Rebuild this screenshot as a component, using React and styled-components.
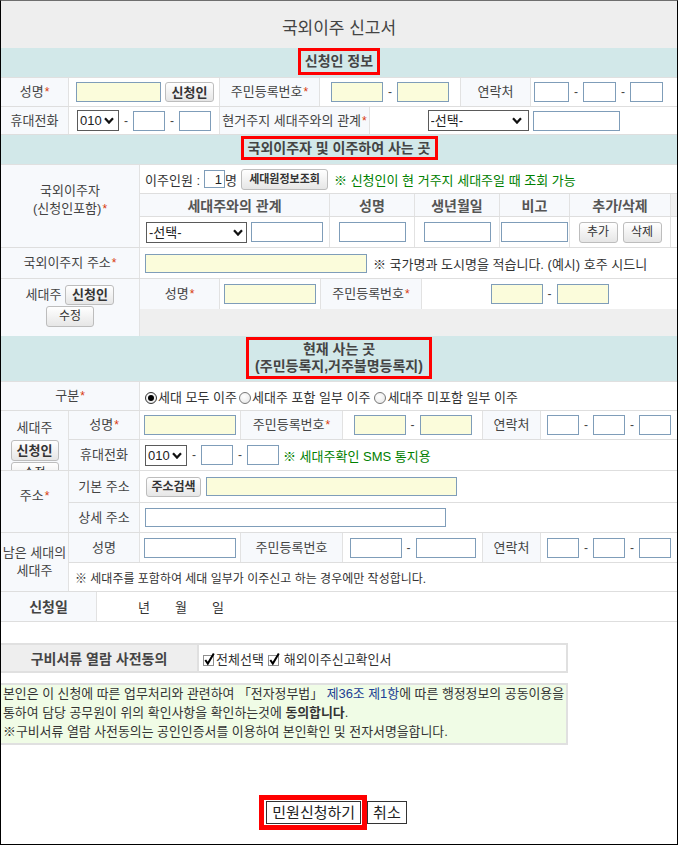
import React from 'react'
import styled, { createGlobalStyle } from 'styled-components'

const GlobalStyle = createGlobalStyle`
  html, body { margin: 0; padding: 0; background: #fff; }
  body {
    font-family: "Liberation Sans", "Noto Sans CJK KR", sans-serif;
    font-size: 13px;
    color: #333;
  }
  *, *::before, *::after { box-sizing: border-box; }
`

const Frame = styled.div`
  width: 678px;
  height: 845px;
  border: 1px solid #000;
  border-top-color: #6e6e6e;
  overflow: hidden;
`

const Title = styled.h1`
  margin: 0;
  height: 47px;
  padding-top: 4px;
  background: #eeeeee;
  display: flex;
  align-items: center;
  justify-content: center;
  font-size: 17px;
  font-weight: normal;
  color: #444;
`

const SectionHead = styled.div`
  height: ${p => p.$h}px;
  background: #d2e8e9;
  border-bottom: 1px solid #e0e0e0;
  display: flex;
  align-items: center;
  justify-content: center;
`

const RedBox = styled.div`
  margin-top: ${p => p.$mt || 0}px;
  border: 3px solid #ff0000;
  padding: 1px ${p => p.$px ?? 2}px;
  font-size: 14px;
  font-weight: bold;
  line-height: ${p => p.$lh}px;
  color: #444;
  text-align: center;
  white-space: nowrap;
`

const Row = styled.div`
  display: flex;
  height: ${p => p.$h}px;
  border-bottom: ${p => (p.$flat ? 'none' : '1px solid #dedede')};
`

const Block = styled.div`
  display: flex;
  height: ${p => p.$h}px;
  border-bottom: 1px solid #dedede;
`

const Stack = styled.div`
  flex: 1 1 0;
  min-width: 0;
  display: flex;
  flex-direction: column;
`

const Filler = styled.div`
  flex: 1 1 0;
  background: #efefef;
`

const Label = styled.div`
  flex: 0 0 ${p => p.$w}px;
  display: flex;
  flex-direction: ${p => (p.$col ? 'column' : 'row')};
  align-items: center;
  justify-content: ${p => (p.$top ? 'flex-start' : 'center')};
  padding: ${p => p.$pad || '0'};
  background: #f7f9fc;
  border-right: 1px solid #e2e2e2;
  color: #444;
  font-size: ${p => (p.$bold ? 14 : 13)}px;
  font-weight: ${p => (p.$bold ? 'bold' : 'normal')};
  line-height: 18px;
  text-align: center;
  white-space: nowrap;
  overflow: hidden;
`

const LabelLine = styled.span`
  display: flex;
  align-items: center;
  gap: 4px;
  margin-top: ${p => p.$mt || 0}px;
`

const Cell = styled.div`
  flex: ${p => (p.$w ? `0 0 ${p.$w}px` : '1 1 0')};
  min-width: 0;
  display: flex;
  align-items: center;
  justify-content: ${p => (p.$center ? 'center' : 'flex-start')};
  padding-left: ${p => p.$pl || 0}px;
  border-right: 1px solid #e2e2e2;
  white-space: nowrap;
  color: #333;
  &:last-child { border-right: none; }
`

const HeadCell = styled.div`
  flex: 0 0 ${p => p.$w}px;
  display: flex;
  align-items: center;
  justify-content: center;
  background: #f7f9fc;
  border-right: 1px solid #e2e2e2;
  font-size: 14px;
  font-weight: bold;
  color: #555;
`

const HeadTail = styled.div`
  flex: 1 1 0;
  background: #f0f0f0;
`

const Star = styled.span`
  color: #d8380d;
  margin-left: 1px;
  font-size: 12px;
`

const Text = styled.span`
  margin-left: ${p => p.$ml || 0}px;
  color: ${p => (p.$green ? '#008000' : '#333')};
  font-size: ${p => p.$fs || 13}px;
`

const DateWord = styled.span`
  margin-left: ${p => p.$ml}px;
  color: #333;
`

const TextInput = styled.input`
  flex: none;
  width: ${p => p.$w}px;
  height: ${p => p.$h || 20}px;
  margin: 0 0 0 ${p => p.$ml || 0}px;
  padding: 0 2px;
  border: 1px solid #7f9db9;
  border-radius: 0;
  background: ${p => (p.$req ? '#fbfcdb' : '#fff')};
  font: inherit;
  font-size: 13px;
  color: #222;
  text-align: ${p => (p.$right ? 'right' : 'left')};
  outline: none;
`

const Dash = styled.span`
  margin: 0 5px;
  color: #444;
  font-size: 12px;
`

const Btn = styled.button`
  flex: none;
  width: ${p => p.$w}px;
  height: ${p => p.$h || 20}px;
  margin: 0 0 0 ${p => p.$ml || 0}px;
  padding: 0;
  border: 1px solid #bdbdbd;
  border-radius: 3px;
  background: linear-gradient(#ffffff, #e6e6e6);
  font-family: inherit;
  font-size: ${p => p.$fs || 12}px;
  font-weight: ${p => (p.$bold ? 'bold' : 'normal')};
  color: #333;
  line-height: 1;
  cursor: pointer;
`

const SelectBox = styled.span`
  position: relative;
  display: inline-block;
  flex: none;
  width: ${p => p.$w}px;
  height: 21px;
  margin-left: ${p => p.$ml || 0}px;
`

const NativeSelect = styled.select`
  appearance: none;
  -webkit-appearance: none;
  width: 100%;
  height: 100%;
  margin: 0;
  padding: 0 0 0 2px;
  border: 1px solid #5a5a5a;
  border-radius: 0;
  background: #fff;
  font: inherit;
  font-size: 13px;
  color: #222;
  outline: none;
`

const Chevron = styled.svg`
  position: absolute;
  right: ${p => p.$r}px;
  top: 7px;
  pointer-events: none;
`

function Select({ w, ml, r = 6, options }) {
  return (
    <SelectBox $w={w} $ml={ml}>
      <NativeSelect defaultValue={options[0]}>
        {options.map(o => <option key={o}>{o}</option>)}
      </NativeSelect>
      <Chevron $r={r} width="10" height="7" viewBox="0 0 10 7">
        <path d="M1 1.2 L5 5.6 L9 1.2" fill="none" stroke="#111" strokeWidth="2.2" />
      </Chevron>
    </SelectBox>
  )
}

const RadioGroup = styled.div`
  display: flex;
  align-items: center;
`

const RadioMark = styled.span`
  position: relative;
  flex: none;
  width: 12px;
  height: 12px;
  margin: 4px 1px 0 ${p => p.$ml || 0}px;
  border-radius: 50%;
  border: 1px solid ${p => (p.$on ? '#333' : '#777')};
  background: radial-gradient(circle at 40% 35%, #fff 0%, #e4e4e4 100%);
  &::after {
    content: '';
    display: ${p => (p.$on ? 'block' : 'none')};
    position: absolute;
    left: 2px;
    top: 2px;
    width: 6px;
    height: 6px;
    border-radius: 50%;
    background: #000;
  }
`

const CheckMark = styled.span`
  display: inline-flex;
  flex: none;
  margin-left: ${p => p.$ml || 0}px;
`

function Check({ ml }) {
  return (
    <CheckMark $ml={ml}>
      <svg width="13" height="15" viewBox="0 0 13 15">
        <rect x="0.5" y="4.5" width="10" height="10" fill="#fff" stroke="#8f8f8f" />
        <path d="M2.3 9 L4.8 12.6 L10.8 2.5" fill="none" stroke="#000" strokeWidth="2" />
      </svg>
    </CheckMark>
  )
}

const ConsentTable = styled.div`
  display: flex;
  width: 567px;
  height: 30px;
  margin-top: 21px;
  border: 2px solid #e0e0e0;
  border-left: none;
`

const ConsentLabel = styled.div`
  flex: 0 0 198px;
  display: flex;
  align-items: center;
  justify-content: center;
  background: #eeeeee;
  border-right: 2px solid #e0e0e0;
  font-size: 14px;
  font-weight: bold;
  color: #444;
`

const ConsentCell = styled.div`
  flex: 1 1 0;
  display: flex;
  align-items: center;
  padding-left: 4px;
  font-size: 13px;
  color: #333;
`

const AgreeBox = styled.div`
  width: 567px;
  height: 62px;
  margin-top: 10px;
  padding-left: 2px;
  background: #f0fce6;
  border: 2px solid #e0e0e0;
  border-left: none;
  font-size: 12.9px;
  line-height: 19px;
  color: #333;
`

const AgreeLine = styled.div`
  white-space: nowrap;
  margin-top: ${p => p.$mt || 0}px;
`

const Law = styled.span`
  color: #1c3f94;
`

const Actions = styled.div`
  display: flex;
  justify-content: center;
  align-items: center;
  margin-top: 50px;
  padding-right: 12px;
`

const Highlight = styled.span`
  display: inline-flex;
  border: 5px solid #ff0000;
  padding: 1px 1px 1px 2px;
`

const ActionBtn = styled.button`
  height: 23px;
  padding: 0 ${p => p.$px}px;
  border: 1px solid #333;
  border-radius: 0;
  background: #fff;
  font-family: inherit;
  font-size: 15px;
  line-height: 21px;
  color: #222;
  cursor: pointer;
`

const phonePrefixes = ['010', '011', '016', '017', '018', '019']

export default function App() {
  return (
    <>
      <GlobalStyle />
      <Frame>
        <Title>국외이주 신고서</Title>

        <SectionHead $h={30}>
          <RedBox $lh={19} $px={4} $mt={-3}>신청인 정보</RedBox>
        </SectionHead>
        <Row $h={29}>
          <Label $w={68}>성명<Star>*</Star></Label>
          <Cell $w={151} $pl={7}>
            <TextInput $w={85} $req />
            <Btn $w={49} $ml={4} $fs={13} $bold>신청인</Btn>
          </Cell>
          <Label $w={100}>주민등록번호<Star>*</Star></Label>
          <Cell $w={141} $center>
            <TextInput $w={52} $req /><Dash>-</Dash><TextInput $w={52} $req />
          </Cell>
          <Label $w={70}>연락처</Label>
          <Cell $pl={3}>
            <TextInput $w={35} /><Dash>-</Dash><TextInput $w={33} /><Dash>-</Dash><TextInput $w={33} />
          </Cell>
        </Row>
        <Row $h={28}>
          <Label $w={68}>휴대전화</Label>
          <Cell $w={151} $pl={8}>
            <Select w={42} r={5} options={phonePrefixes} />
            <Dash>-</Dash><TextInput $w={32} /><Dash>-</Dash><TextInput $w={32} />
          </Cell>
          <Label $w={150}>현거주지 세대주와의 관계<Star>*</Star></Label>
          <Cell $center>
            <Select w={101} r={7} options={['-선택-']} />
            <TextInput $w={87} $ml={4} />
          </Cell>
        </Row>

        <SectionHead $h={30}>
          <RedBox $lh={16} $px={4} $mt={-3}>국외이주자 및 이주하여 사는 곳</RedBox>
        </SectionHead>
        <Block $h={83}>
          <Label $w={139} $col $pad="0 0 12px">
            <span>국외이주자</span>
            <span>(신청인포함)<Star>*</Star></span>
          </Label>
          <Stack>
            <Row $h={29}>
              <Cell $pl={5}>
                <Text>이주인원 :</Text>
                <TextInput $w={21} $h={18} $ml={4} $right defaultValue="1" />
                <Text>명</Text>
                <Btn $w={87} $h={21} $ml={4} $fs={11} $bold>세대원정보조회</Btn>
                <Text $ml={6} $green>※ 신청인이 현 거주지 세대주일 때 조회 가능</Text>
              </Cell>
            </Row>
            <Row $h={23}>
              <HeadCell $w={190}>세대주와의 관계</HeadCell>
              <HeadCell $w={85}>성명</HeadCell>
              <HeadCell $w={85}>생년월일</HeadCell>
              <HeadCell $w={70}>비고</HeadCell>
              <HeadCell $w={101}>추가/삭제</HeadCell>
              <HeadTail />
            </Row>
            <Row $h={30} $flat>
              <Cell $w={190} $pl={6}>
                <Select w={101} r={4} options={['-선택-']} />
                <TextInput $w={72} $ml={4} />
              </Cell>
              <Cell $w={85} $center><TextInput $w={67} /></Cell>
              <Cell $w={85} $center><TextInput $w={67} /></Cell>
              <Cell $w={70} $center><TextInput $w={67} /></Cell>
              <Cell $w={101} $center>
                <Btn $w={39} $h={21}>추가</Btn>
                <Btn $w={39} $h={21} $ml={5}>삭제</Btn>
              </Cell>
              <Cell />
            </Row>
          </Stack>
        </Block>
        <Row $h={31}>
          <Label $w={139}>국외이주지 주소<Star>*</Star></Label>
          <Cell $pl={5}>
            <TextInput $w={222} $h={19} $req />
            <Text $ml={6}>※ 국가명과 도시명을 적습니다. (예시) 호주 시드니</Text>
          </Cell>
        </Row>
        <Row $h={57} $flat>
          <Label $w={139} $col $pad="0 0 4px">
            <LabelLine>세대주<Btn $w={49} $fs={13} $bold>신청인</Btn></LabelLine>
            <LabelLine $mt={1}><Btn $w={48} $h={21}>수정</Btn></LabelLine>
          </Label>
          <Stack>
            <Row $h={30} $flat>
              <Label $w={80}>성명<Star>*</Star></Label>
              <Cell $w={101} $pl={4}><TextInput $w={92} $req /></Cell>
              <Label $w={101}>주민등록번호<Star>*</Star></Label>
              <Cell $center>
                <TextInput $w={52} $req /><Dash>-</Dash><TextInput $w={52} $req />
              </Cell>
            </Row>
            <Filler />
          </Stack>
        </Row>

        <SectionHead $h={46}>
          <RedBox $lh={17} $px={6} $mt={-1}>
            현재 사는 곳<br />(주민등록지,거주불명등록지)
          </RedBox>
        </SectionHead>
        <Row $h={29}>
          <Label $w={139}>구분<Star>*</Star></Label>
          <Cell $pl={5}>
            <RadioGroup>
              <RadioMark $on />
              <Text>세대 모두 이주</Text>
              <RadioMark $ml={2} />
              <Text>세대주 포함 일부 이주</Text>
              <RadioMark $ml={4} />
              <Text>세대주 미포함 일부 이주</Text>
            </RadioGroup>
          </Cell>
        </Row>
        <Block $h={60}>
          <Label $w={68} $col $top $pad="8px 0 0">
            <span>세대주</span>
            <LabelLine $mt={3}><Btn $w={48} $h={21} $fs={13} $bold>신청인</Btn></LabelLine>
            <LabelLine $mt={1}><Btn $w={48} $h={21}>수정</Btn></LabelLine>
          </Label>
          <Stack>
            <Row $h={29}>
              <Label $w={71}>성명<Star>*</Star></Label>
              <Cell $w={101} $pl={4}><TextInput $w={92} $req /></Cell>
              <Label $w={102}>주민등록번호<Star>*</Star></Label>
              <Cell $w={140} $center>
                <TextInput $w={52} $req /><Dash>-</Dash><TextInput $w={52} $req />
              </Cell>
              <Label $w={58}>연락처</Label>
              <Cell $pl={6}>
                <TextInput $w={32} /><Dash>-</Dash><TextInput $w={32} /><Dash>-</Dash><TextInput $w={32} />
              </Cell>
            </Row>
            <Row $h={30} $flat>
              <Label $w={71}>휴대전화</Label>
              <Cell $pl={5}>
                <Select w={42} r={5} options={phonePrefixes} />
                <Dash>-</Dash><TextInput $w={32} /><Dash>-</Dash><TextInput $w={32} />
                <Text $ml={4} $green>※ 세대주확인 SMS 통지용</Text>
              </Cell>
            </Row>
          </Stack>
        </Block>
        <Block $h={62}>
          <Label $w={68} $pad="0 0 12px">주소<Star>*</Star></Label>
          <Stack>
            <Row $h={32}>
              <Label $w={71}>기본 주소</Label>
              <Cell $pl={6}>
                <Btn $w={55} $fs={12} $bold>주소검색</Btn>
                <TextInput $w={251} $h={19} $ml={5} $req />
              </Cell>
            </Row>
            <Row $h={29} $flat>
              <Label $w={71}>상세 주소</Label>
              <Cell $pl={5}><TextInput $w={301} $h={19} /></Cell>
            </Row>
          </Stack>
        </Block>
        <Block $h={59}>
          <Label $w={68} $col>
            <span>남은 세대의</span>
            <span>세대주</span>
          </Label>
          <Stack>
            <Row $h={30}>
              <Label $w={71}>성명</Label>
              <Cell $w={101} $pl={4}><TextInput $w={92} /></Cell>
              <Label $w={102}>주민등록번호</Label>
              <Cell $w={140} $center>
                <TextInput $w={52} /><Dash>-</Dash><TextInput $w={60} />
              </Cell>
              <Label $w={58}>연락처</Label>
              <Cell $pl={6}>
                <TextInput $w={32} /><Dash>-</Dash><TextInput $w={32} /><Dash>-</Dash><TextInput $w={32} />
              </Cell>
            </Row>
            <Row $h={28} $flat>
              <Cell $pl={6}>
                <Text $fs={12}>※ 세대주를 포함하여 세대 일부가 이주신고 하는 경우에만 작성합니다.</Text>
              </Cell>
            </Row>
          </Stack>
        </Block>
        <Row $h={30}>
          <Label $w={96} $bold>신청일</Label>
          <Cell>
            <DateWord $ml={41}>년</DateWord>
            <DateWord $ml={25}>월</DateWord>
            <DateWord $ml={25}>일</DateWord>
          </Cell>
        </Row>

        <ConsentTable>
          <ConsentLabel>구비서류 열람 사전동의</ConsentLabel>
          <ConsentCell>
            <Check />
            <span>전체선택</span>
            <Check ml={4} />
            <Text $ml={3}>해외이주신고확인서</Text>
          </ConsentCell>
        </ConsentTable>

        <AgreeBox>
          <AgreeLine $mt={-1}>
            본인은 이 신청에 따른 업무처리와 관련하여 「전자정부법」 <Law>제36조 제1항</Law>에 따른 행정정보의 공동이용을
          </AgreeLine>
          <AgreeLine>
            통하여 담당 공무원이 위의 확인사항을 확인하는것에 <b>동의합니다</b>.
          </AgreeLine>
          <AgreeLine>※구비서류 열람 사전동의는 공인인증서를 이용하여 본인확인 및 전자서명을합니다.</AgreeLine>
        </AgreeBox>

        <Actions>
          <Highlight>
            <ActionBtn $px={5}>민원신청하기</ActionBtn>
          </Highlight>
          <ActionBtn $px={5}>취소</ActionBtn>
        </Actions>
      </Frame>
    </>
  )
}
